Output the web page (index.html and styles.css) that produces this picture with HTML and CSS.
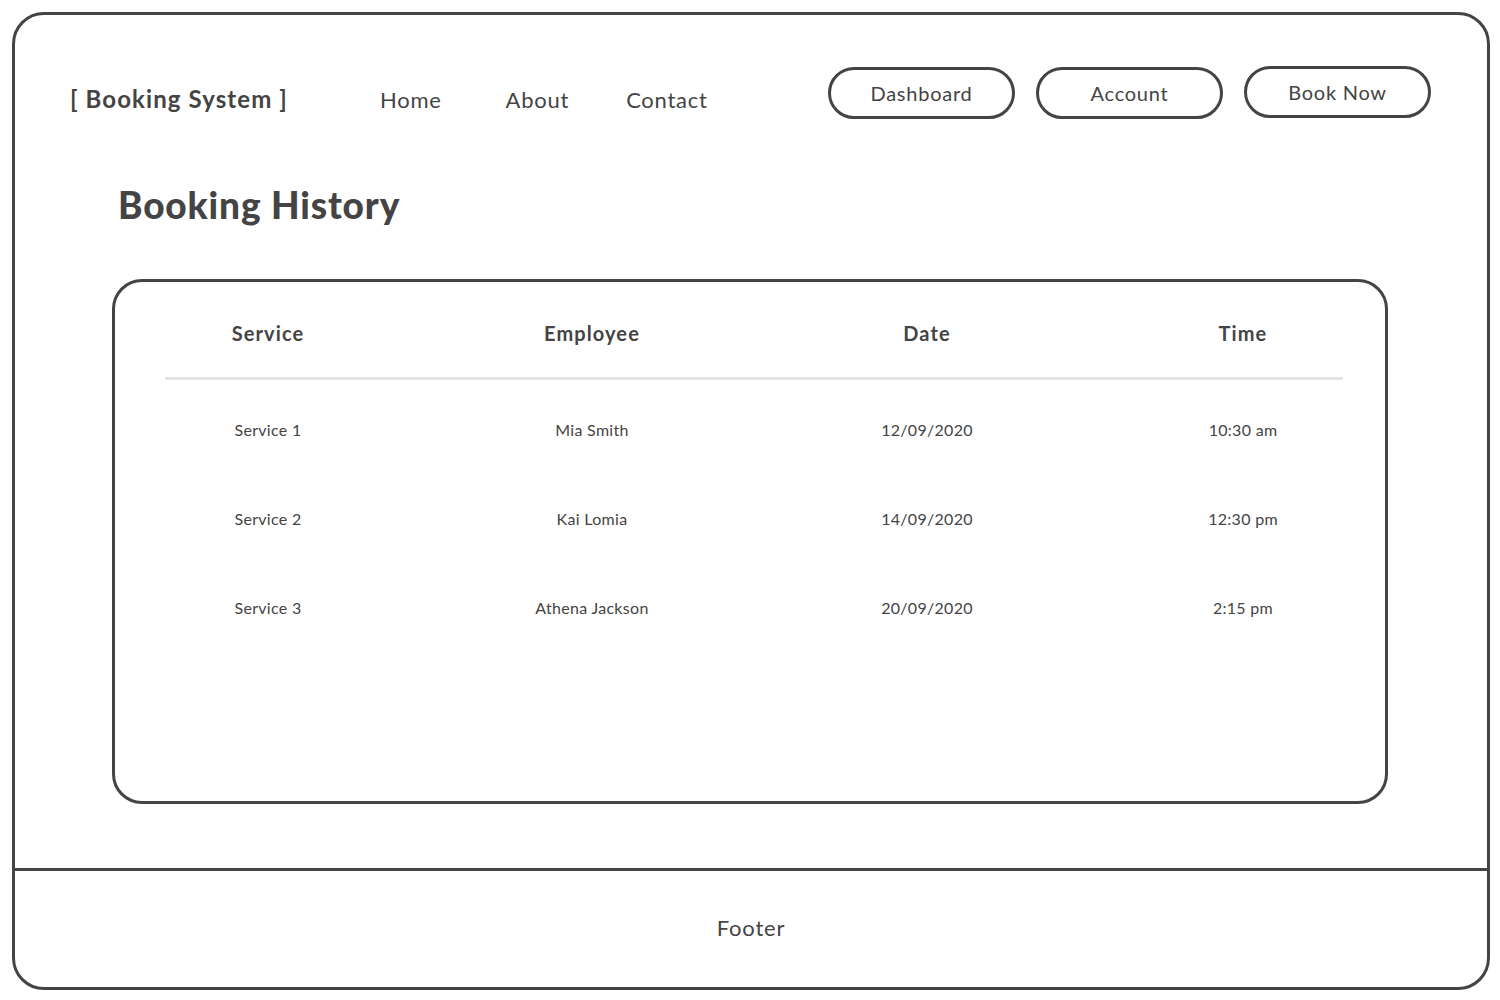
FILE: index.html
```html
<!DOCTYPE html>
<html lang="en">
<head>
<meta charset="utf-8">
<title>Booking History</title>
<link rel="stylesheet" href="styles.css">
</head>
<body>
<div class="frame">
  <header class="header">
    <div class="logo">[ Booking System ]</div>
    <nav class="nav">
      <a class="nav-link">Home</a>
      <a class="nav-link nav-about">About</a>
      <a class="nav-link nav-contact">Contact</a>
    </nav>
    <div class="actions">
      <button class="pill">Dashboard</button>
      <button class="pill">Account</button>
      <button class="pill pill-up">Book Now</button>
    </div>
  </header>
  <main class="main">
    <h1 class="title">Booking History</h1>
    <section class="card">
      <div class="grid head">
        <div>Service</div>
        <div>Employee</div>
        <div>Date</div>
        <div class="last">Time</div>
      </div>
      <div class="divider"></div>
      <div class="grid row">
        <div>Service 1</div>
        <div>Mia Smith</div>
        <div>12/09/2020</div>
        <div class="last">10:30 am</div>
      </div>
      <div class="grid row">
        <div>Service 2</div>
        <div>Kai Lomia</div>
        <div>14/09/2020</div>
        <div class="last">12:30 pm</div>
      </div>
      <div class="grid row">
        <div>Service 3</div>
        <div>Athena Jackson</div>
        <div>20/09/2020</div>
        <div class="last">2:15 pm</div>
      </div>
    </section>
  </main>
  <footer class="footer">Footer</footer>
</div>
</body>
</html>
```

FILE: styles.css
```css
* { box-sizing: border-box; }
html, body { margin: 0; padding: 0; background: #fff; }
body {
  font-family: Lato, "Open Sans", sans-serif;
  color: #444;
}
.frame {
  margin: 12px;
  width: 1478px;
  height: 978px;
  border: 3px solid #444;
  border-radius: 32px;
  display: flex;
  flex-direction: column;
  overflow: hidden;
}
.header {
  display: flex;
  align-items: center;
  padding: 52px 56px 0 55px;
  height: 104px;
}
.logo {
  font-size: 24px;
  font-weight: 700;
  padding-top: 10px;
  letter-spacing: 1.1px;
}
.nav {
  display: flex;
  margin-left: 92px;
  padding-top: 13px;
}
.nav-link {
  font-size: 22px;
  color: #444;
  letter-spacing: 0.75px;
}
.nav-about { margin-left: 64px; }
.nav-contact { margin-left: 57px; }
.actions {
  margin-left: auto;
  display: flex;
  gap: 21px;
  align-self: flex-start;
}
.pill {
  width: 187px;
  height: 52px;
  border: 3px solid #444;
  border-radius: 26px;
  background: #fff;
  font-family: Lato, "Open Sans", sans-serif;
  font-size: 20px;
  color: #444;
  padding: 0;
  letter-spacing: 0.75px;
}
.pill-up { transform: translateY(-1px); }
.main {
  flex: 1;
  padding: 0 0 0 97px;
}
.title {
  margin: 0;
  padding: 64px 0 0 6px;
  font-size: 37px;
  font-weight: 900;
  line-height: 44px;
  letter-spacing: 0.85px;
}
.card {
  margin-top: 52px;
  width: 1276px;
  height: 525px;
  border: 3px solid #444;
  border-radius: 30px;
  padding: 0 42px 0 50px;
}
.grid {
  display: grid;
  grid-template-columns: 206px 442px 228px 302px;
  text-align: center;
}
.grid .last { padding-left: 102px; }
.head {
  font-size: 20px;
  font-weight: 700;
  height: 95px;
  padding-top: 39px;
  line-height: 24px;
  letter-spacing: 1.1px;
}
.divider {
  width: 1178px;
  height: 3px;
  background: #e4e4e4;
}
.row {
  font-size: 16px;
  line-height: 20px;
  height: 89px;
  padding-top: 40px;
  letter-spacing: 0.3px;
}
.footer {
  height: 119px;
  border-top: 3px solid #444;
  display: flex;
  align-items: center;
  justify-content: center;
  font-size: 22px;
  letter-spacing: 0.8px;
  padding-bottom: 4px;
}
```
